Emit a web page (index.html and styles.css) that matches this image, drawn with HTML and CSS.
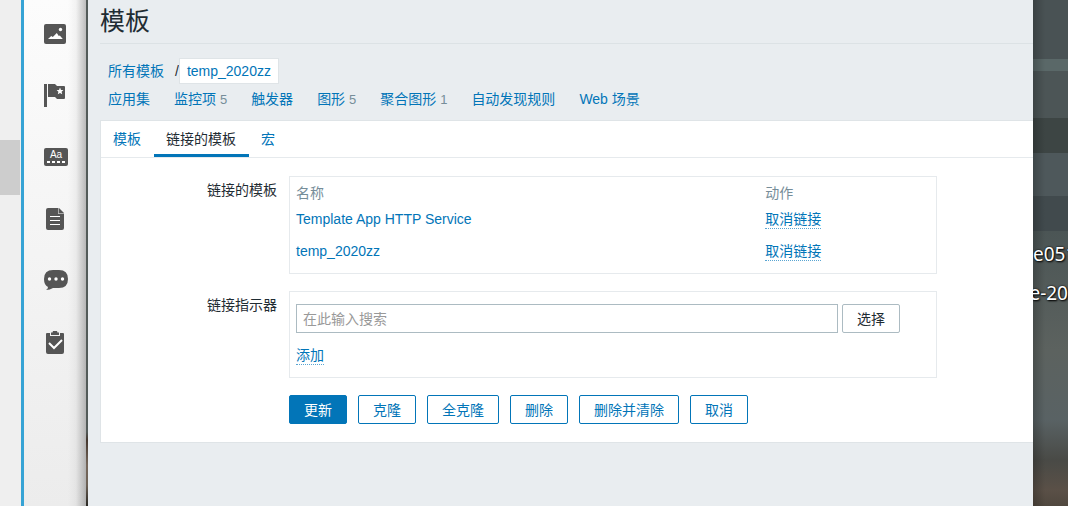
FILE: index.html
```html
<!DOCTYPE html>
<html lang="zh-CN">
<head>
<meta charset="utf-8">
<title>模板</title>
<link rel="stylesheet" href="styles.css">
</head>
<body>
<div class="screen">
  <div class="scroll-rail"><div class="scroll-thumb"></div></div>
  <aside class="toolbar">
    <nav class="tools" aria-label="工具">
      <button class="tool" type="button" aria-label="图片">
        <svg width="22" height="20" viewBox="0 0 22 20"><rect width="22" height="20" rx="2" fill="#555"/><path d="M4 15l3.200-3 1.600 1 4-4 2 3 1-.6 3 3.600z" fill="#fff"/><circle cx="16.500" cy="5.500" r="1.700" fill="#fff"/></svg>
      </button>
      <button class="tool" type="button" aria-label="标记">
        <svg width="22" height="23" viewBox="0 0 22 23"><path d="M0 0h3v23H0zM4 0h7l2 2h7q1 0 1 1v11q0 1-1 1h-7l-2-2H4z" fill="#555"/><path d="M16 3.600l1 2.300 2.400.2-1.800 1.700.6 2.400-2.200-1.200-2.200 1.200.6-2.400-1.800-1.700 2.400-.2z" fill="#fff"/></svg>
      </button>
      <button class="tool" type="button" aria-label="文字">
        <svg class="wide" width="24" height="18" viewBox="0 0 24 18"><rect width="24" height="18" rx="2" fill="#555"/><text class="glyph" x="12" y="10" text-anchor="middle">Aa</text><path d="M3 14h3M8 14h3M13 14h3M18 14h3" stroke="#fff" stroke-width="2"/></svg>
      </button>
      <button class="tool" type="button" aria-label="文档">
        <svg width="18" height="22" viewBox="0 0 18 22"><path d="M2 0h10v6h6v14q0 2-2 2H2q-2 0-2-2V2q0-2 2-2z" fill="#555"/><path d="M13 0l5 5h-5z" fill="#555"/><path d="M12.500 0v5.500H18" fill="none" stroke="#aaa"/><path d="M4 8.500h10M4 12.500h10M4 16.500h10" stroke="#fff"/></svg>
      </button>
      <button class="tool" type="button" aria-label="评论">
        <svg class="wide" width="24" height="20" viewBox="0 0 24 20"><path d="M9 0h6q9 0 9 9t-9 9H9q-3 2-7 2 2-1 2-3-4-2-4-8 0-9 9-9z" fill="#555"/><g fill="#fff"><circle cx="5.500" cy="9" r="1.700"/><circle cx="12" cy="9" r="1.700"/><circle cx="18.500" cy="9" r="1.700"/></g></svg>
      </button>
      <button class="tool" type="button" aria-label="任务">
        <svg width="18" height="23" viewBox="0 0 18 23"><path d="M1 2h3v3h10V2h3q1 0 1 1v18q0 2-2 2H2q-2 0-2-2V3q0-1 1-1z" fill="#555"/><path d="M5 1.500h1.500L7 0h4l.5 1.500H13V4H5z" fill="#555"/><path d="M3 12l5 5 8-8" fill="none" stroke="#fff" stroke-width="2"/></svg>
      </button>
    </nav>
  </aside>

  <main class="page">
    <h1 class="title">模板</h1>
    <nav class="crumbs" aria-label="路径">
      <a href="#all">所有模板</a><span class="slash">/</span><a class="current" href="#temp">temp_2020zz</a>
    </nav>
    <nav class="sections" aria-label="模板内容">
      <a href="#apps">应用集</a>
      <span><a href="#items">监控项</a> <span class="count">5</span></span>
      <a href="#triggers">触发器</a>
      <span><a href="#graphs">图形</a> <span class="count">5</span></span>
      <span><a href="#screens">聚合图形</a> <span class="count">1</span></span>
      <a href="#discovery">自动发现规则</a>
      <a href="#web">Web 场景</a>
    </nav>

    <section class="panel">
      <nav class="tabs" aria-label="选项卡">
        <a class="tab" href="#template">模板</a>
        <a class="tab active" href="#linked" aria-current="page">链接的模板</a>
        <a class="tab" href="#macros">宏</a>
      </nav>
      <form class="form">
        <span class="label" id="linked-label">链接的模板</span>
        <div class="box list-box">
          <table class="linked" aria-labelledby="linked-label">
            <thead><tr><th scope="col">名称</th><th class="action" scope="col">动作</th></tr></thead>
            <tbody>
              <tr><td><a href="#http">Template App HTTP Service</a></td><td><a class="dotted" href="#unlink-http">取消链接</a></td></tr>
              <tr><td><a href="#temp">temp_2020zz</a></td><td><a class="dotted" href="#unlink-temp">取消链接</a></td></tr>
            </tbody>
          </table>
        </div>
        <label class="label" for="search">链接指示器</label>
        <div class="box search-box">
          <div class="search-row">
            <input class="search" id="search" type="text" placeholder="在此输入搜索">
            <button class="btn neutral" type="button">选择</button>
          </div>
          <a class="dotted" href="#add">添加</a>
        </div>
        <div class="actions">
          <button class="btn primary" type="submit">更新</button>
          <button class="btn" type="button">克隆</button>
          <button class="btn" type="button">全克隆</button>
          <button class="btn" type="button">删除</button>
          <button class="btn" type="button">删除并清除</button>
          <button class="btn" type="button">取消</button>
        </div>
      </form>
    </section>
  </main>

  <aside class="desktop">
    <span class="file">e051</span>
    <span class="file second">e-20</span>
  </aside>
</div>
</body>
</html>
```

FILE: styles.css
```css
* {
  box-sizing: border-box;
}

body {
  margin: 0;
  color: #1f2c33;
  font: 14px/20px "Liberation Sans", "Noto Sans CJK SC", sans-serif;
}

a {
  color: #0275b8;
  text-decoration: none;
}

.screen {
  display: flex;
  min-height: 100vh;
}

.scroll-rail {
  width: 21px;
  padding-top: 140px;
  background: #efefef;
}

.scroll-thumb {
  width: 20px;
  height: 55px;
  background: #cdcdcd;
}

.toolbar {
  width: 67px;
  padding: 3px 0;
  border-left: 3px solid #36a3d5;
  background:
    linear-gradient(#535b59 0 432px, #44372e 440px, #75675b 465px, #6d6257 485px, #292723) right / 2px 100% no-repeat,
    linear-gradient(to right, transparent 44px, rgba(0, 0, 0, 0.04) 52px, rgba(0, 0, 0, 0.25) 62px),
    linear-gradient(#fcfcfc, #ececec);
}

.tools {
  display: grid;
  grid-template-rows: repeat(6, 1fr);
  height: 370px;
  padding-right: 2px;
  place-items: center;
}

.tool {
  display: flex;
  padding: 0;
  border: 0;
  background: none;
}

.wide {
  margin-left: 2px;
}

.glyph {
  fill: #fff;
  font: 10px "Liberation Sans", sans-serif;
}

.page {
  flex: 1;
  min-width: 0;
  padding-left: 12px;
  background: #e9edf0;
}

.title {
  margin: 0;
  padding-bottom: 1px;
  border-bottom: 1px solid #dce2e5;
  font-size: 25px;
  font-weight: 400;
  line-height: 42px;
}

.crumbs {
  display: flex;
  align-items: center;
  padding: 14px 8px 0;
}

.slash {
  margin-left: 11px;
}

.current {
  padding: 2px 7px;
  border: 1px solid #dfe4e7;
  background: #fff;
  line-height: 20px;
}

.sections {
  display: flex;
  flex-wrap: wrap;
  gap: 0 24px;
  padding: 5px 8px 10px;
}

.count {
  color: #768d99;
  font-size: 13px;
}

.panel {
  border: 1px solid #dfe4e7;
  border-right: 0;
  background: #fff;
}

.tabs {
  display: flex;
  border-bottom: 1px solid #e6eaed;
}

.tab {
  padding: 8px 13px 5px 12px;
  border-bottom: 3px solid transparent;
}

.active {
  border-color: #0275b8;
  color: #1f2c33;
}

.form {
  display: grid;
  grid-template-columns: 176px minmax(0, 648px);
  gap: 17px 12px;
  padding: 18px 0;
}

.label {
  padding-top: 4px;
  text-align: right;
}

.box {
  border: 1px solid #e6eaed;
}

.list-box {
  padding: 6px;
}

.linked {
  width: 100%;
  border-collapse: collapse;
}

.linked th {
  height: 20px;
  padding: 0;
  color: #768d99;
  font-weight: 400;
  text-align: left;
}

.linked .action {
  width: 26%;
}

.linked td {
  height: 32px;
  padding: 0;
}

.dotted {
  display: inline-block;
  border-bottom: 1px dotted #5aa5d2;
  line-height: 18px;
  vertical-align: middle;
}

.search-box {
  display: flex;
  flex-direction: column;
  align-items: flex-start;
  gap: 13px;
  padding: 12px 36px 12px 6px;
}

.search-row {
  display: flex;
  gap: 4px;
  width: 100%;
}

.search {
  flex: 1;
  min-width: 0;
  height: 29px;
  padding: 0 6px;
  border: 1px solid #acbbc2;
  background: #fff;
  color: inherit;
  font: inherit;
}

.search::placeholder {
  color: #999;
}

.actions {
  display: flex;
  flex-wrap: wrap;
  grid-column: 2;
  gap: 11px;
}

.btn {
  height: 29px;
  padding: 0 14px;
  border: 1px solid #0275b8;
  border-radius: 2px;
  background: #fff;
  color: #0275b8;
  font: inherit;
}

.primary {
  background: #0275b8;
  color: #fff;
}

.neutral {
  border-color: #acbbc2;
  color: #1f2c33;
}

.desktop {
  display: flex;
  flex-direction: column;
  gap: 11px;
  width: 35px;
  padding-top: 240px;
  overflow: hidden;
  background:
    linear-gradient(to right, rgba(0, 0, 0, 0.2), transparent 12px),
    linear-gradient(#495254 0 59px, #5a6868 59px 71px, #4c5556 71px 118px, #3d4544 118px 153px, #4e585b 153px 196px, #414a4d 196px 231px, #4b5555 231px, #5c625f 350px, #596264 420px, #494a46 460px, #5a5047 490px, #50483f);
}

.file {
  align-self: flex-start;
  color: #fff;
  font: 19px/28px "Noto Sans", sans-serif;
  text-shadow: 1px 1px 2px #000, 0 0 2px #000;
  white-space: nowrap;
}

.second {
  align-self: flex-end;
}
```
